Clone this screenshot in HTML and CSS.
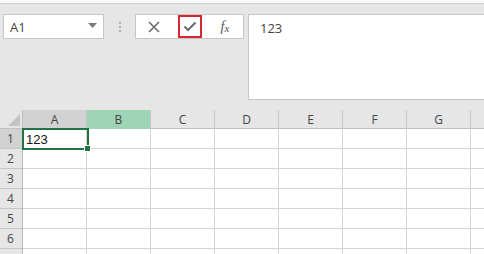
FILE: index.html
```html
<!DOCTYPE html>
<html>
<head>
<meta charset="utf-8">
<link rel="stylesheet" href="styles.css">
</head>
<body>
<div class="topstrip"></div>
<div class="toolbar">
  <div class="namebox">
    <span class="nb-text">A1</span>
    <svg class="nb-arrow" width="9" height="5" viewBox="0 0 9 5"><path d="M0 0h9L4.5 5z" fill="#7a7a7a"/></svg>
  </div>
  <div class="dots"><span></span><span></span><span></span></div>
  <div class="btngroup">
    <div class="btn">
      <svg width="12" height="12" viewBox="0 0 12 12"><path d="M1 1L11 11M11 1L1 11" stroke="#6b6b6b" stroke-width="1.6"/></svg>
    </div>
    <div class="btn btn-active">
      <svg width="14" height="11" viewBox="0 0 14 11"><path d="M1.5 5.5L5 9L12.5 1.5" stroke="#6b6b6b" stroke-width="2" fill="none"/></svg>
    </div>
    <div class="btn fx"><i>f</i><i class="x">x</i></div>
  </div>
  <div class="formula">123</div>
</div>
<div class="grid">
  <div class="hdr corner"><svg width="12" height="12" viewBox="0 0 12 12"><path d="M12 0V12H0z" fill="#c4c4c4"/></svg></div>
  <div class="hdr col sel">A</div>
  <div class="hdr col hov">B</div>
  <div class="hdr col">C</div>
  <div class="hdr col">D</div>
  <div class="hdr col">E</div>
  <div class="hdr col">F</div>
  <div class="hdr col">G</div>
  <div class="hdr col"></div>

  <div class="hdr row sel">1</div>
  <div class="cell first"><div class="active">123<span class="handle"></span></div></div>
  <div class="cell"></div><div class="cell"></div><div class="cell"></div><div class="cell"></div><div class="cell"></div><div class="cell"></div><div class="cell"></div>

  <div class="hdr row">2</div>
  <div class="cell"></div><div class="cell"></div><div class="cell"></div><div class="cell"></div><div class="cell"></div><div class="cell"></div><div class="cell"></div><div class="cell"></div>
  <div class="hdr row">3</div>
  <div class="cell"></div><div class="cell"></div><div class="cell"></div><div class="cell"></div><div class="cell"></div><div class="cell"></div><div class="cell"></div><div class="cell"></div>
  <div class="hdr row">4</div>
  <div class="cell"></div><div class="cell"></div><div class="cell"></div><div class="cell"></div><div class="cell"></div><div class="cell"></div><div class="cell"></div><div class="cell"></div>
  <div class="hdr row">5</div>
  <div class="cell"></div><div class="cell"></div><div class="cell"></div><div class="cell"></div><div class="cell"></div><div class="cell"></div><div class="cell"></div><div class="cell"></div>
  <div class="hdr row">6</div>
  <div class="cell"></div><div class="cell"></div><div class="cell"></div><div class="cell"></div><div class="cell"></div><div class="cell"></div><div class="cell"></div><div class="cell"></div>
  <div class="hdr row"></div>
  <div class="cell"></div><div class="cell"></div><div class="cell"></div><div class="cell"></div><div class="cell"></div><div class="cell"></div><div class="cell"></div><div class="cell"></div>
</div>
</body>
</html>
```
FILE: styles.css
```css
html, body {
  margin: 0;
  padding: 0;
  width: 484px;
  height: 254px;
  overflow: hidden;
  background: #e6e6e6;
  font-family: "Open Sans", "Noto Sans", sans-serif;
  color: #444;
}
.topstrip {
  height: 3px;
  background: #f9f9f9;
  border-bottom: 1px solid #d0d0d0;
}
.toolbar {
  display: flex;
  align-items: flex-start;
  padding: 10px 0 0 3px;
  height: 96px;
  box-sizing: border-box;
}
.namebox {
  width: 101px;
  height: 25px;
  box-sizing: border-box;
  background: #fff;
  border: 1px solid #c6c6c6;
  display: flex;
  align-items: center;
  justify-content: space-between;
  padding: 0 6px 0 6px;
  font-size: 13px;
  color: #444;
}
.nb-arrow { margin-top: -3px; }
.dots {
  width: 31px;
  height: 25px;
  display: flex;
  flex-direction: column;
  align-items: center;
  justify-content: center;
  gap: 2px;
}
.dots span {
  width: 2px;
  height: 2px;
  background: #b0b0b0;
}
.btngroup {
  width: 109px;
  height: 25px;
  box-sizing: border-box;
  background: #fff;
  border: 1px solid #c6c6c6;
  display: flex;
  align-items: center;
  justify-content: space-between;
  padding: 0 6px;
}
.btn {
  width: 24px;
  height: 23px;
  box-sizing: border-box;
  display: flex;
  align-items: center;
  justify-content: center;
}
.btn-active {
  border: 2px solid #d6262f;
}
.fx {
  font-family: "Liberation Serif", serif;
  font-size: 14px;
  color: #555;
}
.fx .x { font-size: 11px; margin-top: 3px; }
.formula {
  margin-left: 4px;
  flex: 1;
  height: 86px;
  box-sizing: border-box;
  background: #fff;
  border: 1px solid #c6c6c6;
  border-right: none;
  padding: 4px 11px;
  font-size: 13px;
  color: #444;
}
.grid {
  margin-top: 10px;
  display: grid;
  grid-template-columns: 23px repeat(8, 64px);
  grid-auto-rows: 20px;
  grid-template-rows: 19px;
  background: #fff;
}
.hdr {
  background: #e6e6e6;
  font-size: 12px;
  color: #444;
  display: flex;
  align-items: center;
  justify-content: center;
  box-sizing: border-box;
}
.corner {
  justify-content: flex-end;
  align-items: flex-end;
  padding: 0 2px 2px 0;
  border-right: 1px solid #c0c0c0;
  border-bottom: 1px solid #c0c0c0;
}
.col {
  border-right: 1px solid #c6c6c6;
  border-bottom: 1px solid #c0c0c0;
}
.col.sel {
  background: #d2d2d2;
  border-bottom: 1px solid #9f9f9f;
}
.col.hov {
  background: #9fd5b7;
  border-bottom: 1px solid #9fd5b7;
}
.row {
  justify-content: flex-start;
  padding-left: 7px;
  border-right: 1px solid #b8b8b8;
  border-bottom: 1px solid #c6c6c6;
}
.row.sel { background: #d2d2d2; }
.cell {
  box-sizing: border-box;
  border-right: 1px solid #d4d4d4;
  border-bottom: 1px solid #d4d4d4;
  position: relative;
}
.cell.first { z-index: 2; }
.active {
  position: absolute;
  left: -1px;
  top: -1px;
  width: 67px;
  height: 22px;
  box-sizing: border-box;
  border: 2px solid #217346;
  padding: 1px 0 0 2px;
  line-height: 18px;
  font-family: "Liberation Sans", sans-serif;
  font-size: 13px;
  color: #111;
}
.handle {
  position: absolute;
  right: -4px;
  bottom: -4px;
  width: 5px;
  height: 5px;
  background: #217346;
  border: 1px solid #fff;
}
```
